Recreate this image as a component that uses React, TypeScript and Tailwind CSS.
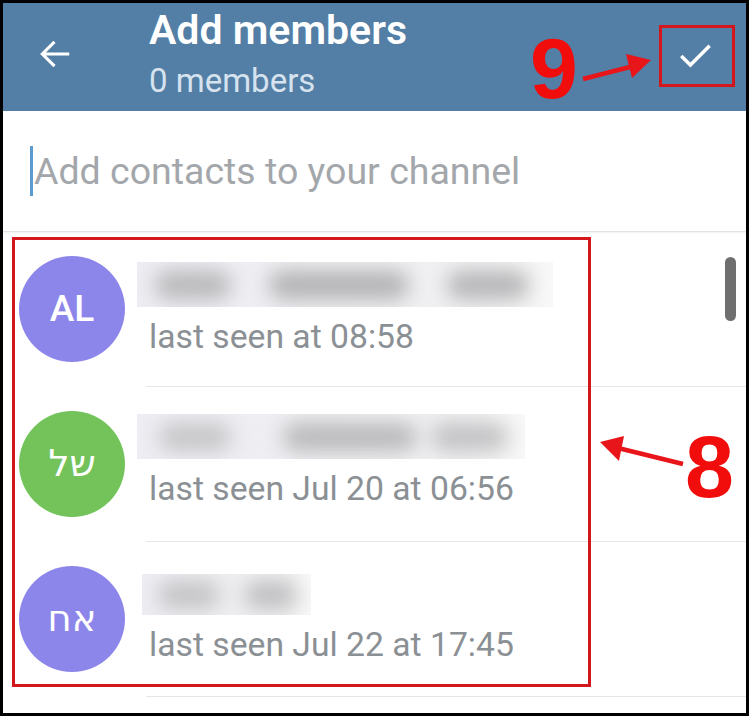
import React from 'react';

type Contact = {
  initials: string;
  color: string;
  seen: string;
  nameBox: string;
  blobs: { ml: number; w: number; tone: string }[];
};

const CONTACTS: Contact[] = [
  {
    initials: 'AL',
    color: 'bg-[#8d86ea]',
    seen: 'last seen at 08:58',
    nameBox: 'mt-[30px] ml-0 w-[416px] h-[45px]',
    blobs: [
      { ml: 18, w: 76, tone: '#b8b8ba' },
      { ml: 38, w: 140, tone: '#b2b2b4' },
      { ml: 38, w: 82, tone: '#b5b5b7' },
    ],
  },
  {
    initials: 'של',
    color: 'bg-[#74c35a]',
    seen: 'last seen Jul 20 at 06:56',
    nameBox: 'mt-[27px] ml-0 w-[388px] h-[45px]',
    blobs: [
      { ml: 22, w: 72, tone: '#c6c6c8' },
      { ml: 52, w: 134, tone: '#b9b9bb' },
      { ml: 14, w: 77, tone: '#c2c2c4' },
    ],
  },
  {
    initials: 'אח',
    color: 'bg-[#8d86ea]',
    seen: 'last seen Jul 22 at 17:45',
    nameBox: 'mt-[32px] ml-[5px] w-[169px] h-[41px]',
    blobs: [
      { ml: 16, w: 62, tone: '#c4c4c6' },
      { ml: 24, w: 53, tone: '#bfbfc1' },
    ],
  },
];

const BlurredName: React.FC<{ box: string; blobs: Contact['blobs'] }> = ({ box, blobs }) => (
  <div className={`flex items-center overflow-hidden bg-[linear-gradient(to_right,#ededf3,#f1f1f2_85%,#f8f8f8)] ${box}`}>
    {blobs.map((b, i) => (
      <div
        key={i}
        className="h-[28px] shrink-0 rounded-full blur-[10px]"
        style={{ marginLeft: b.ml, width: b.w, background: b.tone }}
      />
    ))}
  </div>
);

const Row: React.FC<{ c: Contact }> = ({ c }) => (
  <div className="flex h-[155px] items-start border-b border-[#e6e6e6] [border-image:linear-gradient(to_right,transparent_144px,#e6e6e6_144px)_1]">
    <div
      className={`ml-[16px] mt-[24px] flex h-[106px] w-[106px] shrink-0 items-center justify-center rounded-full ${c.color} text-[37px] font-medium text-white`}
    >
      {c.initials}
    </div>
    <div className="ml-[12px] flex flex-col">
      <BlurredName box={c.nameBox} blobs={c.blobs} />
      <div className="ml-[12px] mt-[10px] text-[33.7px] leading-[40px] text-[#8b9095]">{c.seen}</div>
    </div>
  </div>
);

const App: React.FC = () => {
  return (
    <div className="relative h-[717px] w-[750px] bg-white font-['Roboto','DejaVu_Sans',sans-serif]">
      <div className="flex h-[716px] w-[749px] flex-col overflow-hidden border-[3px] border-black bg-white">
        {/* header */}
        <div className="flex h-[108px] shrink-0 items-start bg-[#537ea5]">
          <svg className="ml-[33px] mt-[32px]" width="38" height="38" viewBox="0 0 24 24">
            <path
              d="M20 12H4.5M11 5l-7 7 7 7"
              fill="none"
              stroke="white"
              strokeWidth="2"
              strokeLinecap="square"
            />
          </svg>
          <div className="ml-[75px] flex flex-col">
            <div className="mt-[4px] text-[41px] font-semibold leading-[46px] text-white">Add members</div>
            <div className="mt-[9px] text-[33px] leading-[38px] text-[#d6e3ef]">0 members</div>
          </div>
          <svg className="ml-auto mr-[29px] mt-[30px]" width="44" height="44" viewBox="0 0 24 24">
            <path d="M4.5 12.5l5 5L20 7" fill="none" stroke="white" strokeWidth="1.9" />
          </svg>
        </div>

        {/* search */}
        <div className="flex h-[121px] shrink-0 items-center border-b border-[#e2e2e2] shadow-[0_1px_2px_rgba(0,0,0,0.06)]">
          <div className="ml-[27px] h-[50px] w-[3px] bg-[#5c9bd0]" />
          <div className="ml-[1px] text-[37.5px] leading-[44px] text-[#a3a7ab]">Add contacts to your channel</div>
        </div>

        {/* contacts */}
        <div className="flex flex-col">
          {CONTACTS.map((c, i) => (
            <Row key={i} c={c} />
          ))}
        </div>
      </div>

      {/* scrollbar */}
      <div className="absolute left-[725px] top-[257px] h-[64px] w-[11px] rounded-full bg-[#6f6f6f]" />

      {/* annotations */}
      <div className="absolute left-[659px] top-[25px] h-[62px] w-[76px] border-[3px] border-[#d3171c]" />
      <div className="absolute left-[12px] top-[237px] h-[450px] w-[579px] border-[3px] border-[#d3171c]" />
      <div className="absolute left-[530px] top-[20px] font-['Liberation_Sans',sans-serif] text-[86px] font-bold leading-[96px] text-[#f20d0d]">
        9
      </div>
      <div className="absolute left-[685px] top-[418px] font-['Liberation_Sans',sans-serif] text-[88px] font-bold leading-[98px] text-[#f20d0d]">
        8
      </div>
      <svg className="pointer-events-none absolute left-0 top-0" width="750" height="717">
        <line x1="583" y1="79" x2="630" y2="67" stroke="#e8151b" strokeWidth="4.5" />
        <polygon points="651,60 626,54 632,78" fill="#e8151b" />
        <line x1="683" y1="464" x2="618" y2="448" stroke="#e8151b" strokeWidth="4.5" />
        <polygon points="600,442 624,436 619,461" fill="#e8151b" />
      </svg>
    </div>
  );
};

export default App;
